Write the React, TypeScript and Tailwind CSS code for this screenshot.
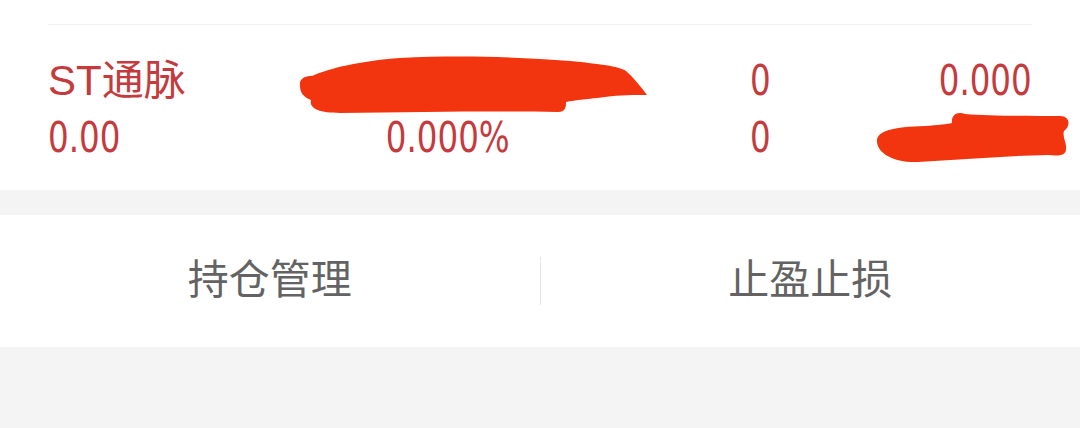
import React from "react";

const numFont = {
  fontFamily: '"Liberation Sans Narrow", "DejaVu Sans Condensed", "Liberation Sans", sans-serif',
};

function Redactions() {
  // hand-drawn marker strokes covering hidden values
  return (
    <svg className="pointer-events-none absolute inset-0" width="1080" height="190" viewBox="0 0 1080 190">
      <path
        fill="#f2350f"
        d="M300 86 C299 79 304 76 312 76 C330 68 360 61 400 58 C460 55 520 57 570 61 C600 64 618 66 626 71 C634 78 641 87 647 95 C635 95 620 95 605 97 C590 99 575 100 566 102 C566 106 566 112 558 112 C500 111 420 112 340 113 C318 113 309 108 311 100 C303 97 300 92 300 86 Z"
      />
      <path
        fill="#f2350f"
        d="M877 142 C876 131 892 127 925 126 C938 125 947 124 952 123 C951 115 957 111 965 114 C990 116 1030 116 1060 116 C1070 116 1071 126 1064 131 C1062 137 1067 143 1066 149 C1066 156 1058 156 1048 155 C1000 156 960 160 918 162 C895 163 878 154 877 142 Z"
      />
    </svg>
  );
}

export default function App() {
  return (
    <div className="w-[1080px] h-[428px] bg-[#f4f4f4] overflow-hidden" style={{ fontFamily: '"Liberation Sans", "Noto Sans CJK SC", sans-serif' }}>
      <section className="relative bg-white h-[190px] px-12 pt-6">
        <div className="border-t border-[#efefef]" />
        <div className="grid grid-cols-[254px_292px_332px_minmax(0,1fr)] mt-[27px] text-[#c53a3d]">
          <div className="h-[56px] flex items-center text-[42px]">ST通脉</div>
          <div className="h-[56px]" />
          <div className="h-[56px] flex items-center justify-center text-[43px]" style={numFont}>
            <span className="inline-block scale-x-[0.84] origin-center">0</span>
          </div>
          <div className="h-[56px] flex items-center justify-end text-[43px]" style={numFont}>
            <span className="inline-block shrink-0 scale-x-[0.84] origin-right">0.000</span>
          </div>

          <div className="h-[58px] flex items-center text-[43px]" style={numFont}>
            <span className="inline-block scale-x-[0.84] origin-left">0.00</span>
          </div>
          <div className="h-[58px] flex items-center justify-center text-[43px]" style={numFont}>
            <span className="inline-block scale-x-[0.84] origin-center">0.000%</span>
          </div>
          <div className="h-[58px] flex items-center justify-center text-[43px]" style={numFont}>
            <span className="inline-block scale-x-[0.84] origin-center">0</span>
          </div>
          <div className="h-[58px]" />
        </div>
        <Redactions />
      </section>

      <section className="mt-[25px] bg-white h-[132px] flex items-center text-[41px] text-[#636363]">
        <button className="flex-1 h-full flex items-center justify-center">持仓管理</button>
        <div className="w-px h-12 bg-[#e6e6e6]" />
        <button className="flex-1 h-full flex items-center justify-center">止盈止损</button>
      </section>
    </div>
  );
}
